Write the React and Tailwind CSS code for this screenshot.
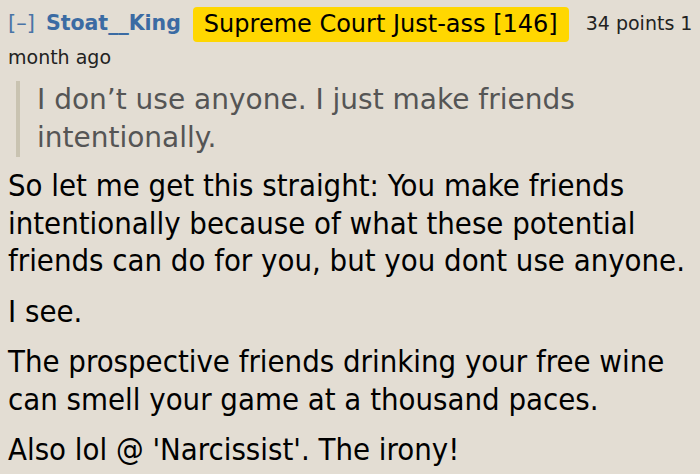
import React from 'react';

const body = "font-['DejaVu_Sans_Condensed','DejaVu_Sans',sans-serif]";

export default function App() {
  return (
    <div className="w-[700px] h-[474px] overflow-hidden bg-[#e3ddd3] pl-[8px] pr-[2px]">
      {/* entête du commentaire */}
      <div className="pt-[7px] leading-[30px] font-['DejaVu_Sans',sans-serif] text-[19px] text-[#222]">
        <span className="text-[#4a74a6] text-[21px]">[–]</span>
        <span className="text-[#3b6ba3] text-[20.5px] font-bold ml-[11px]">Stoat__King</span>
        <span className="inline-block align-middle ml-[12px] mr-[17px] bg-[#ffd700] rounded-[4px] px-[11px] h-[35px] leading-[35px] text-[24px] text-black">
          Supreme Court Just-ass [146]
        </span>
        <span>34 points 1 month ago</span>
      </div>

      {/* citation */}
      <div className="mt-[9px] ml-[8px] border-l-[4px] border-[#c9c3b1] pl-[17px] font-['DejaVu_Sans',sans-serif] text-[28px] leading-[38px] text-[#555]">
        I don’t use anyone. I just make friends intentionally.
      </div>

      <div className={`${body} text-[30.8px] leading-[37.5px] text-black`}>
        <p className="mt-[10px]">So let me get this straight: You make friends intentionally because of what these potential friends can do for you, but you dont use anyone.</p>
        <p className="mt-[13px]">I see.</p>
        <p className="mt-[13px]">The prospective friends drinking your free wine can smell your game at a thousand paces.</p>
        <p className="mt-[13px]">Also lol @ 'Narcissist'. The irony!</p>
      </div>
    </div>
  );
}
